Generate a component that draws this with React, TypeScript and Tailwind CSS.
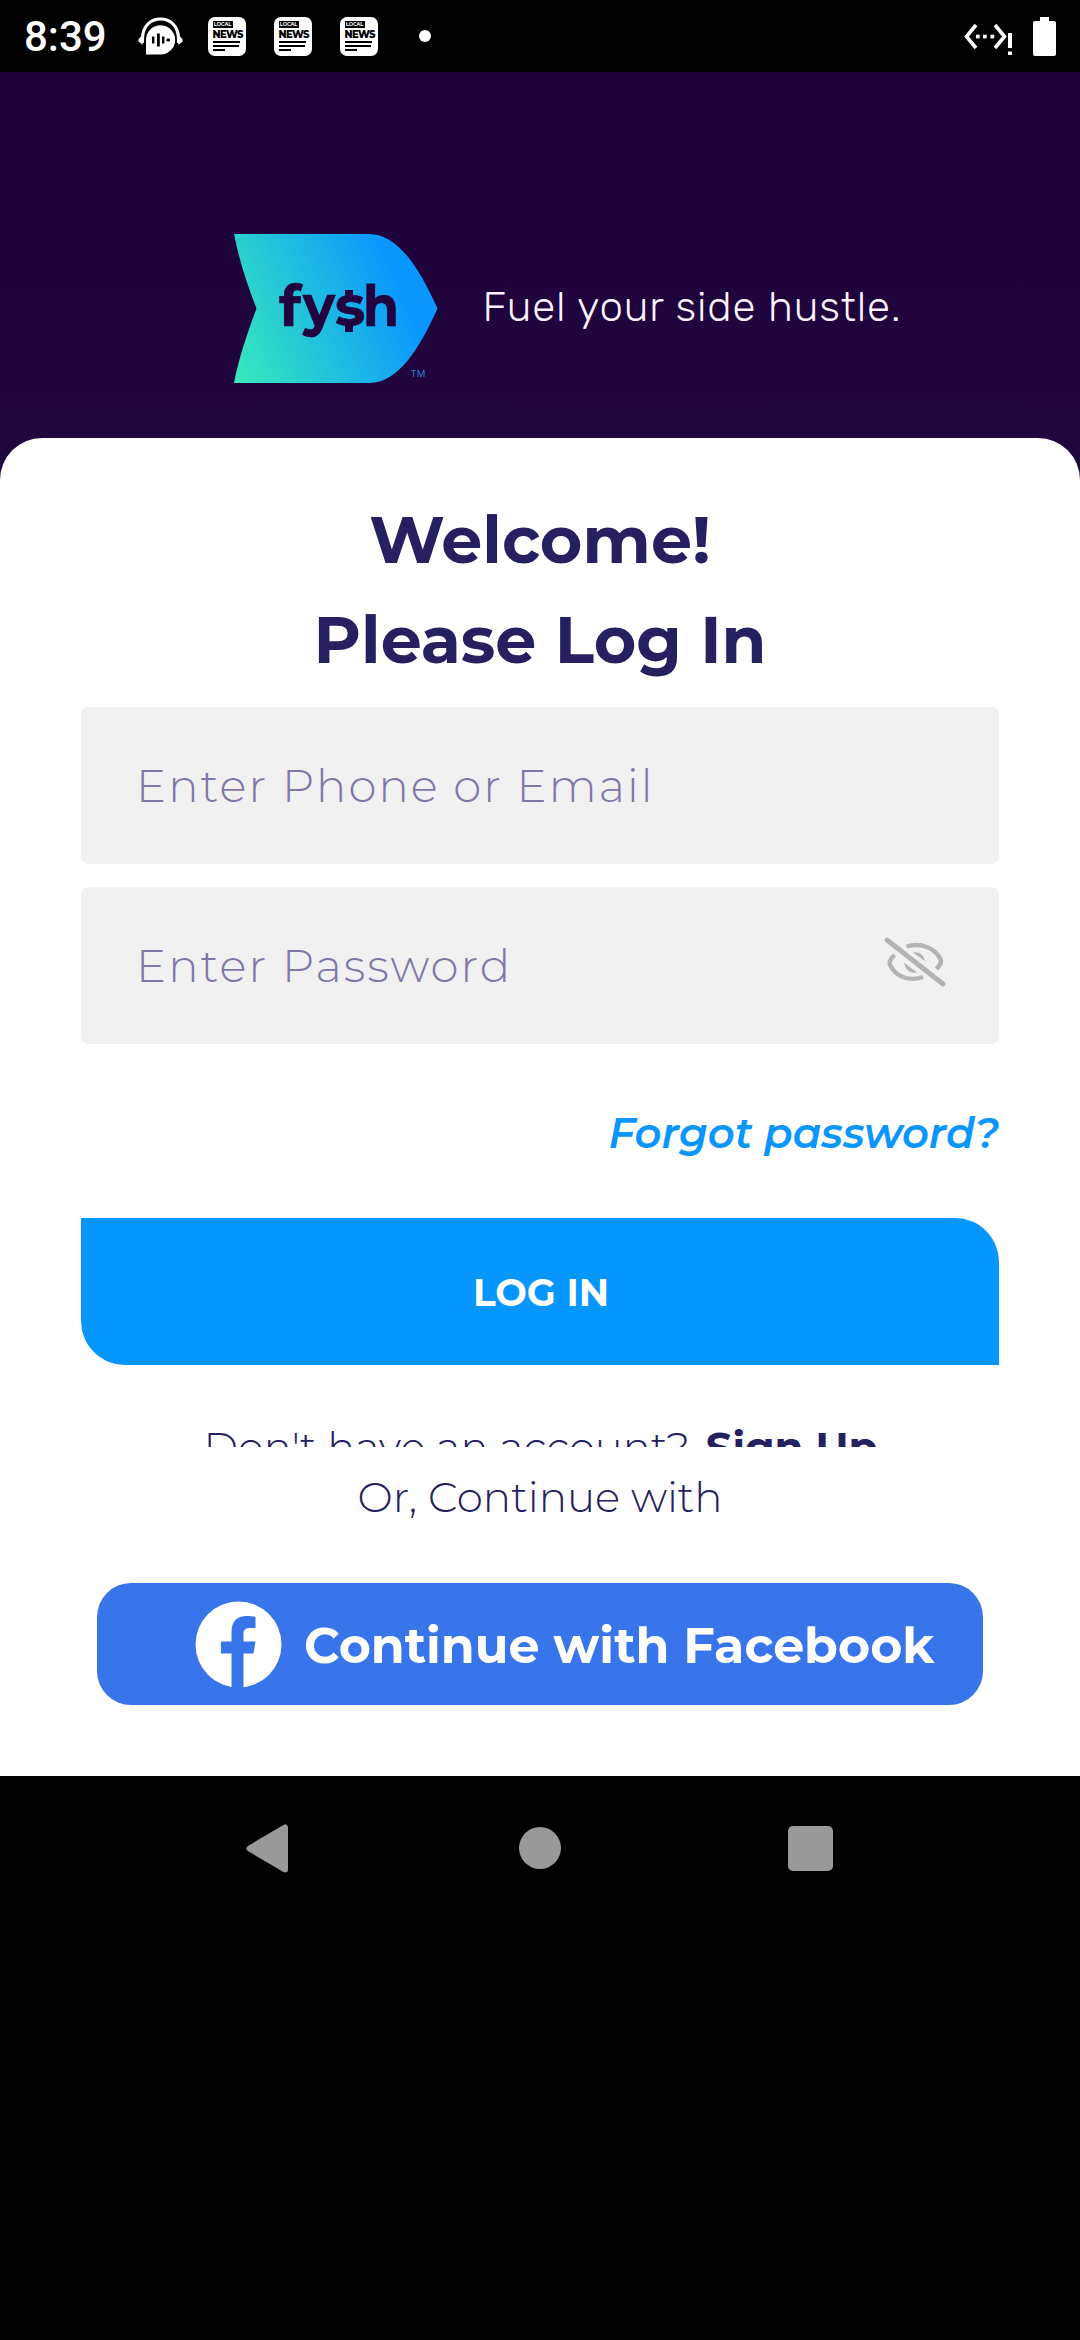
function HeadphoneIcon() {
  return (
    <svg width="45" height="38" viewBox="0 0 45 38" fill="#fff">
      <path d="M4.5 26 V21 C5 9 12.500 2 22.500 2 C32.500 2 40 9 40.500 21 V26" fill="none" stroke="#fff" strokeWidth="3.200" />
      <path d="M4.600 18 L0.500 22 V24.500 L4.600 28 Z M40.400 18 L44.500 22 V24.500 L40.400 28 Z" />
      <path d="M8 37.500 V22 A14.600 14.600 0 1 1 22.600 37.500 Z" />
      <g fill="#000">
        <rect x="14" y="19.500" width="2.400" height="7" />
        <rect x="19" y="16.500" width="2.800" height="13" />
        <rect x="24" y="19.500" width="2.400" height="7" />
        <rect x="28.500" y="21.500" width="3.500" height="3" rx="1.200" />
      </g>
    </svg>
  );
}

function NewsIcon() {
  return (
    <div className="flex h-[39px] w-[38px] flex-col items-start overflow-hidden rounded-[7px] bg-white pt-[4px] pl-[4.500px] font-['Montserrat','Inter',sans-serif] text-black">
      <div className="flex h-[7px] w-[20px] items-center justify-center bg-black text-[5px] leading-none font-bold text-white">LOCAL</div>
      <div className="mt-[2px] text-[10px] leading-[9px] font-extrabold tracking-[-0.6px]">NEWS</div>
      <div className="mt-[2.500px] h-[1.500px] w-[27px] bg-black" />
      <div className="mt-[2.500px] h-[1.500px] w-[26px] bg-black" />
      <div className="mt-[2.500px] h-[1.500px] w-[12px] bg-black" />
    </div>
  );
}

function NetworkIcon() {
  return (
    <svg width="50" height="34" viewBox="0 0 50 34" fill="#fff">
      <path d="M12 3 L2.500 14.500 L12 26 M31 3 L40.500 14.500 L31 26" fill="none" stroke="#fff" strokeWidth="3.600" />
      <rect x="12" y="12.700" width="3.700" height="3.700" />
      <rect x="19" y="12.700" width="3.700" height="3.700" />
      <rect x="26.500" y="12.700" width="3.700" height="3.700" />
      <rect x="44" y="11" width="4" height="15" />
      <rect x="44" y="29.500" width="4" height="3.500" />
    </svg>
  );
}

function StatusBar() {
  return (
    <header className="flex h-[72px] items-center bg-black pr-[24px] pl-[24px]">
      <span className="w-[110px] pt-[2px] font-['Roboto',sans-serif] text-[42px] leading-none font-medium text-white">8:39</span>
      <div className="ml-[4px]"><HeadphoneIcon /></div>
      <div className="ml-[25px] flex gap-[28px]">
        <NewsIcon />
        <NewsIcon />
        <NewsIcon />
      </div>
      <span className="ml-[41px] h-[12px] w-[12px] rounded-full bg-white" />
      <div className="ml-auto flex items-center">
        <div className="mt-[5px] mr-[19px]"><NetworkIcon /></div>
        <svg width="23" height="39" viewBox="0 0 23 39" fill="#fff">
          <rect x="7" y="0" width="9" height="8" />
          <rect x="0" y="4" width="23" height="35" rx="2" />
        </svg>
      </div>
    </header>
  );
}

function Logo() {
  return (
    <svg width="204" height="149" viewBox="0 0 204 149">
      <defs>
        <linearGradient id="fin" gradientUnits="userSpaceOnUse" x1="5" y1="148" x2="178" y2="72">
          <stop offset="0" stopColor="#37e8bc" />
          <stop offset="1" stopColor="#0a96ff" />
        </linearGradient>
      </defs>
      <path d="M0 0 H135 C165 0 186 36 203.500 74.500 C186 113 165 149 135 149 H0 C5 124 13 100 22.500 74.500 C13 50 5 26 0 0 Z" fill="url(#fin)" />
      <g fill="#21043f" stroke="#21043f" strokeWidth="0.6" fontFamily="Montserrat, Inter, sans-serif" fontWeight="700" fontSize="57">
        <text x="45" y="92">f</text>
        <text x="69" y="92" textLength="32" lengthAdjust="spacingAndGlyphs">y</text>
        <text x="101" y="92">s</text>
        <text x="129" y="92" textLength="36" lengthAdjust="spacingAndGlyphs">h</text>
        <rect x="111" y="56" width="8" height="7" stroke="none" />
        <rect x="111" y="91" width="8" height="7" stroke="none" />
      </g>
      <text x="176.500" y="143" fill="#2a7fd0" fontFamily="Inter, sans-serif" fontSize="9.500">TM</text>
    </svg>
  );
}

function EyeOffIcon() {
  return (
    <svg width="62" height="50" viewBox="0 0 62 50" fill="none" stroke="#b3b3b3" strokeWidth="4.400">
      <path d="M22.500 9.500 C37 5 51 11 56.500 22 Q58.500 25.500 52.500 32" />
      <path d="M10.500 18 Q3.500 24.500 6.500 29 C13 40.500 26 44.500 39 40" />
      <path d="M29 15.500 Q38 13.500 41.500 24.500 Z" fill="#b3b3b3" stroke="none" />
      <path d="M20 25.500 Q22.500 37.500 33 35.500 Z" fill="#b3b3b3" stroke="none" />
      <path d="M3 3 L59 47" strokeLinecap="round" strokeWidth="4.800" />
    </svg>
  );
}

function FacebookIcon() {
  return (
    <svg width="87" height="87" viewBox="0 0 87 87">
      <circle cx="43.500" cy="43.500" r="43" fill="#fff" />
      <path d="M36.500 87 V52.500 H26 V40.500 H36.500 V31 C36.500 20.500 42 15 51.500 15 C55 15 58 15.400 60.500 15.800 V27 H55 C50 27 48.500 29.500 48.500 33 V40.500 H60.500 L58.500 52.500 H48.500 V87 Z" fill="#3975ea" />
    </svg>
  );
}

export default function App() {
  return (
    <div className="h-[2340px] w-[1080px] overflow-hidden bg-black font-['Montserrat','Inter',sans-serif] whitespace-nowrap">
      <StatusBar />
      <div className="bg-linear-to-b from-[#1e0039] to-[#210740] to-[24%]">
        <div className="flex h-[366px] items-start pt-[162px] pl-[234px]">
          <Logo />
          <p className="mt-[48px] ml-[44.500px] font-['Rubik','Inter',sans-serif] text-[42px] leading-[50px] font-light tracking-[0.88px] text-[#fdf3ff]">Fuel your side hustle.</p>
        </div>
        <main className="flex h-[1338px] flex-col rounded-t-[42px] bg-white px-[81px] pt-[52px]">
          <h1 className="text-center text-[65px] leading-[100px] font-bold text-[#25205f]">
            Welcome!
            <br />
            Please Log In
          </h1>
          <div className="mt-[17px] flex h-[157px] items-center rounded-[8px] bg-[#f1f1f1] pl-[55px] text-[45px] font-light tracking-[2.05px] text-[#352773]">
            <span className="opacity-60">Enter Phone or Email</span>
          </div>
          <div className="mt-[23px] flex h-[157px] items-center justify-between rounded-[8px] bg-[#f1f1f1] pr-[53px] pl-[55px] text-[45px] font-light tracking-[2.05px] text-[#352773]">
            <span className="opacity-60">Enter Password</span>
            <div className="-mt-[8px]"><EyeOffIcon /></div>
          </div>
          <a className="mt-[63px] self-end text-[41.800px] leading-[52px] font-semibold text-[#0a96ff] italic">Forgot password?</a>
          <button className="mt-[59px] h-[147px] rounded-tr-[44px] rounded-bl-[44px] bg-[#0596ff] pt-[3px] pl-[2px] text-[37.500px] font-bold text-white">LOG IN</button>
          <p className="mt-[56px] h-[26px] overflow-hidden pl-[1px] text-center text-[41.700px] leading-[52px] font-light text-[#25205f]">
            Don't have an account? <span className="ml-[5px] text-[42px] font-bold">Sign Up</span>
          </p>
          <p className="mt-[25px] text-center text-[42px] leading-[50px] font-light text-[#25205f]">Or, Continue with</p>
          <button className="mx-[16px] mt-[61px] flex h-[122px] items-center rounded-[34px] bg-[#3975ea] pl-[98px] text-[49.100px] font-bold text-white">
            <FacebookIcon />
            <span className="mt-[3px] ml-[22px]">Continue with Facebook</span>
          </button>
        </main>
      </div>
      <nav className="flex h-[144px] items-center bg-black pl-[246px]">
        <svg width="43" height="49" viewBox="0 0 43 49" fill="#999" stroke="#999" strokeWidth="6" strokeLinejoin="round">
          <path d="M3.500 24.500 L39 3.500 V45.500 Z" />
        </svg>
        <span className="ml-[230px] h-[42px] w-[42px] rounded-full bg-[#999]" />
        <span className="ml-[227px] h-[45px] w-[45px] rounded-[5px] bg-[#999]" />
      </nav>
    </div>
  );
}
